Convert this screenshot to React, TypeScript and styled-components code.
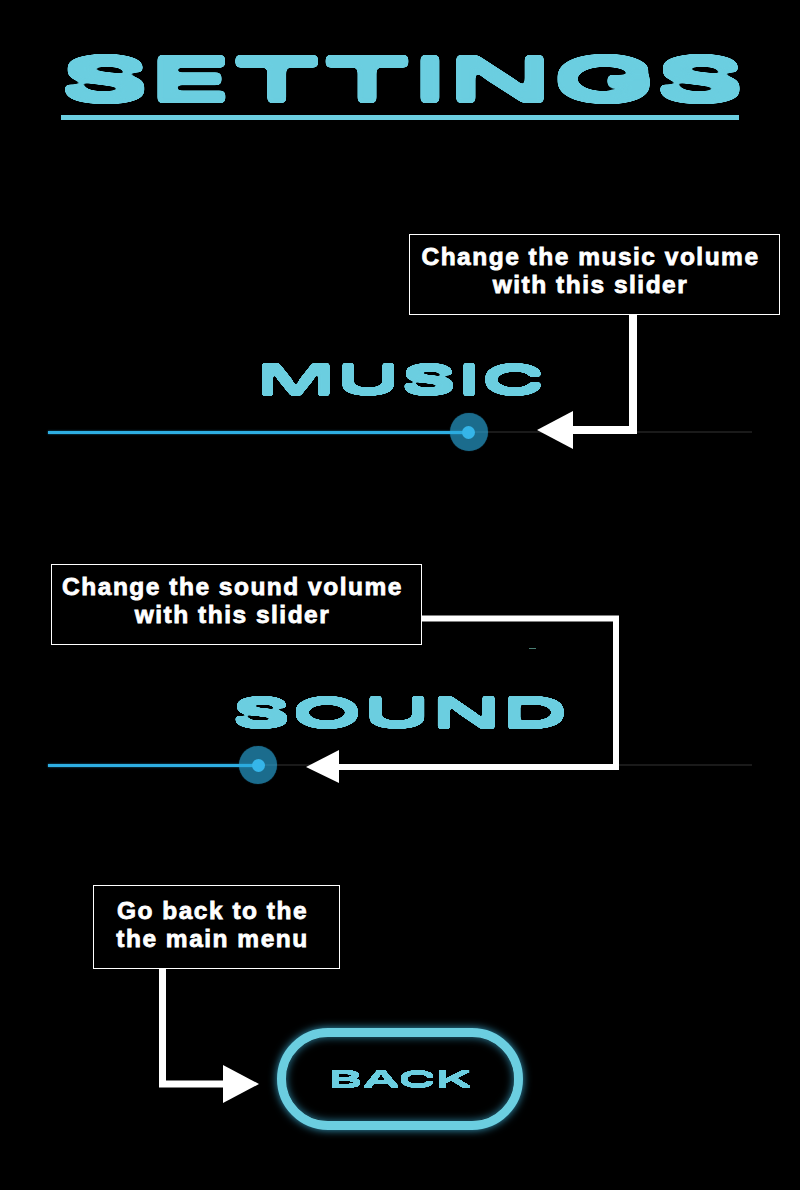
import React from 'react'
import styled, { createGlobalStyle } from 'styled-components'

const GlobalStyle = createGlobalStyle`
  html, body {
    margin: 0;
    background: #000;
  }
`

const Page = styled.div`
  width: 800px;
  height: 1190px;
  background: #000;
  overflow: hidden;
  display: flex;
  flex-direction: column;
  font-family: 'Liberation Sans', Arial, sans-serif;
`

const Header = styled.header`
  padding: 53px 61px 0;
  height: 67px;
  display: flex;
  flex-direction: column;
  justify-content: space-between;
`

const Rule = styled.div`
  height: 5px;
  background: #6bcee0;
`

// real text, stretched wide and rounded off by the svg filters below
const Logotype = styled.div<{ $size: number; $height: number; $filter: string }>`
  height: ${(p) => p.$height}px;
  line-height: ${(p) => p.$height}px;
  font-family: Inter, 'Liberation Sans', sans-serif;
  font-size: ${(p) => p.$size}px;
  font-weight: 600;
  color: #6bcee0;
  display: flex;
  justify-content: center;
  white-space: nowrap;
  filter: url(#${(p) => p.$filter});
`

const Stretched = styled.span<{ $x: number; $spacing?: number }>`
  display: inline-block;
  transform: scaleX(${(p) => p.$x});
  letter-spacing: ${(p) => p.$spacing ?? 0}px;
`

const Section = styled.section<{ $top: number }>`
  position: relative;
  margin-top: ${(p) => p.$top}px;
  display: flex;
  flex-direction: column;
`

const Callout = styled.div<{ $left: number; $width: number; $height: number; $pad?: number }>`
  box-sizing: border-box;
  margin-left: ${(p) => p.$left}px;
  width: ${(p) => p.$width}px;
  height: ${(p) => p.$height}px;
  padding: ${(p) => p.$pad ?? 8}px 8px 0 0;
  border: 1px solid #fff;
  color: #fff;
  font-size: 24.5px;
  font-weight: 700;
  line-height: 28px;
  letter-spacing: 1.5px;
  text-align: center;
  -webkit-text-stroke: 0.8px #fff;
`

const LabelRow = styled.div<{ $top: number }>`
  margin-top: ${(p) => p.$top}px;
`

const SliderRow = styled.div`
  position: relative;
  margin: 14px 48px 0;
  height: 40px;
  display: flex;
  align-items: center;
`

const Track = styled.div`
  width: 100%;
  height: 2px;
  background: #1a1a1a;
`

const Fill = styled.div`
  height: 3px;
  background: #2eaee2;
  box-shadow: 0 0 2px #1e7ea8;
`

const Thumb = styled.div`
  position: absolute;
  top: 1px;
  width: 38px;
  height: 38px;
  margin-left: -19px;
  border-radius: 50%;
  background: rgba(42, 169, 220, 0.64);
  box-shadow: 0 0 1px rgba(42, 169, 220, 0.6);
  display: flex;
  align-items: center;
  justify-content: center;

  &::after {
    content: '';
    width: 13px;
    height: 13px;
    border-radius: 50%;
    background: #35b5e9;
  }
`

const Connector = styled.svg<{ $left: number; $top: number }>`
  position: absolute;
  left: ${(p) => p.$left}px;
  top: ${(p) => p.$top}px;
  overflow: visible;
`

const Speck = styled.div`
  position: absolute;
  left: 529px;
  top: 84px;
  width: 7px;
  height: 1px;
  background: #4a7f74;
`

const BackButton = styled.button`
  box-sizing: border-box;
  align-self: center;
  margin-top: 59px;
  width: 246px;
  height: 102px;
  padding: 0;
  border: 9px solid #6bcee0;
  border-radius: 51px;
  background: #000;
  box-shadow: 0 0 8px rgba(60, 175, 215, 0.9), inset 0 0 8px rgba(60, 175, 215, 0.75);
  display: flex;
  align-items: center;
  justify-content: center;
`

const Filters = styled.svg`
  position: absolute;
  width: 0;
  height: 0;
`

type RoundFilterProps = { id: string; grow: string; blur: number }

const RoundFilter = ({ id, grow, blur }: RoundFilterProps) => (
  <filter id={id} x="-10%" y="-30%" width="120%" height="160%" colorInterpolationFilters="sRGB">
    <feMorphology operator="dilate" radius={grow} />
    <feGaussianBlur stdDeviation={blur} />
    <feColorMatrix values="1 0 0 0 0  0 1 0 0 0  0 0 1 0 0  0 0 0 14 -6" />
  </filter>
)

const Slider = ({ value }: { value: number }) => (
  <SliderRow>
    <Track>
      <Fill style={{ width: `${value}%` }} />
    </Track>
    <Thumb style={{ left: `${value}%` }} />
  </SliderRow>
)

const Arrowhead = ({ points }: { points: string }) => <polygon points={points} fill="#fff" />

const App = () => {
  return (
    <Page>
      <GlobalStyle />
      <Filters aria-hidden="true">
        <RoundFilter id="round-title" grow="0 3.2" blur={2.4} />
        <RoundFilter id="round-label" grow="0 2.2" blur={1.6} />
        <RoundFilter id="round-back" grow="0 0.6" blur={0.5} />
      </Filters>

      <Header>
        <Logotype $size={58} $height={52} $filter="round-title">
          <Stretched $x={2.455} $spacing={-1.5}>SETTINGS</Stretched>
        </Logotype>
        <Rule />
      </Header>

      <Section $top={114}>
        <Callout $left={409} $width={371} $height={81}>
          Change the music volume
          <br />
          with this slider
        </Callout>
        <LabelRow $top={47}>
          <Logotype $size={40} $height={36} $filter="round-label">
            <Stretched $x={2.18}>MUSIC</Stretched>
          </Logotype>
        </LabelRow>
        <Slider value={59.8} />
        <Connector $left={537} $top={81} width={100} height={135} viewBox="0 0 100 135">
          <polyline points="96,0 96,115 36,115" fill="none" stroke="#fff" strokeWidth={8} />
          <Arrowhead points="0,115 36,96 36,134" />
        </Connector>
      </Section>

      <Section $top={112}>
        <Callout $left={51} $width={371} $height={81}>
          Change the sound volume
          <br />
          with this slider
        </Callout>
        <LabelRow $top={50}>
          <Logotype $size={40} $height={36} $filter="round-label">
            <Stretched $x={2.32}>SOUND</Stretched>
          </Logotype>
        </LabelRow>
        <Slider value={29.83} />
        <Speck />
        <Connector $left={306} $top={51} width={316} height={170} viewBox="0 0 316 170">
          <polyline points="116,3.5 310,3.5 310,152 33,152" fill="none" stroke="#fff" strokeWidth={6} />
          <Arrowhead points="0,152 33,135 33,168" />
        </Connector>
      </Section>

      <Section $top={100}>
        <Callout $left={93} $width={247} $height={84} $pad={11}>
          Go back to the
          <br />
          the main menu
        </Callout>
        <BackButton type="button">
          <Logotype $size={21} $height={19} $filter="round-back">
            <Stretched $x={2.45}>BACK</Stretched>
          </Logotype>
        </BackButton>
        <Connector $left={159} $top={84} width={100} height={135} viewBox="0 0 100 135">
          <polyline points="3.5,0 3.5,115 64,115" fill="none" stroke="#fff" strokeWidth={7} />
          <Arrowhead points="100,115 64,96 64,134" />
        </Connector>
      </Section>
    </Page>
  )
}

export default App
